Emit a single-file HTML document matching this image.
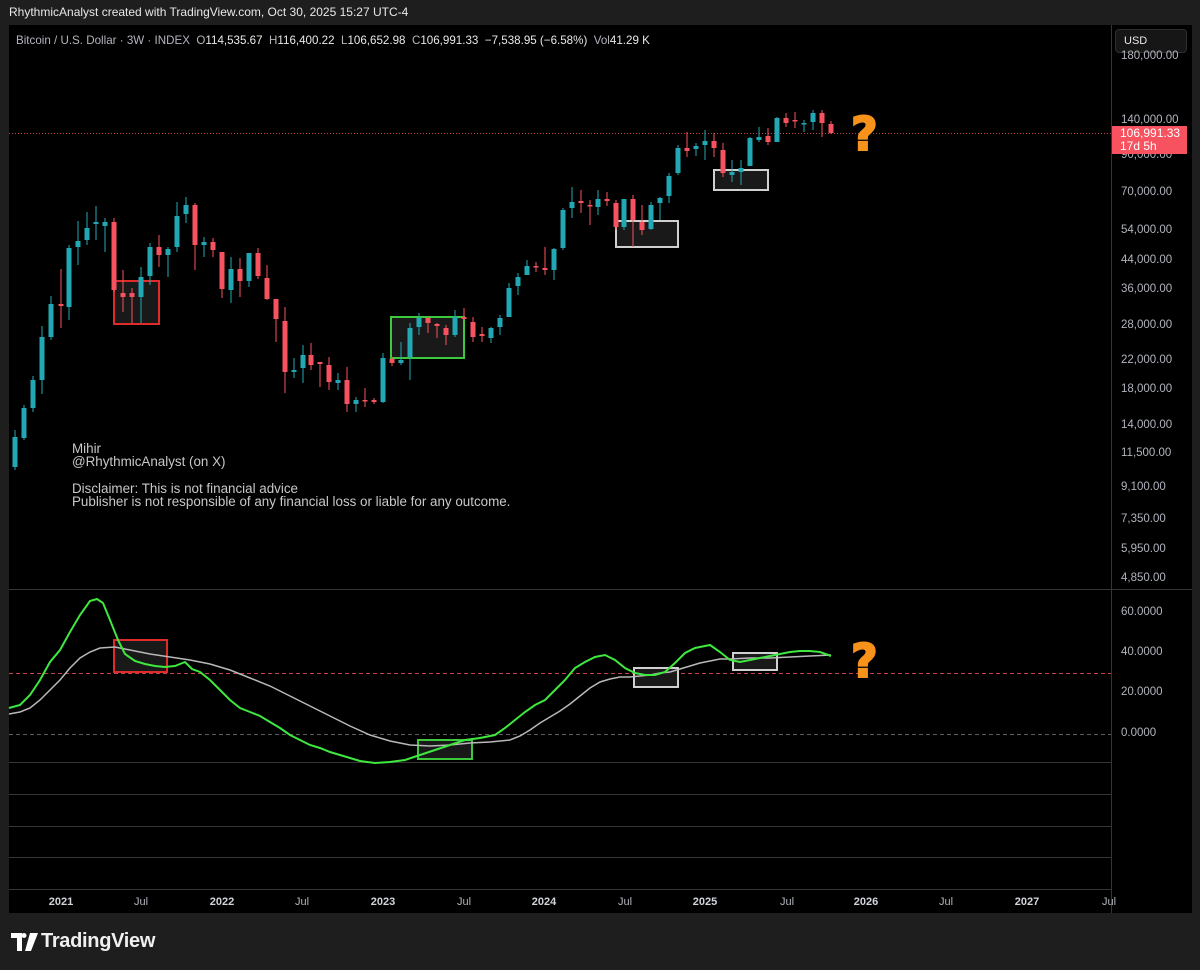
<!DOCTYPE html>
<html><head><meta charset="utf-8"><style>
*{margin:0;padding:0;box-sizing:border-box}
body{width:1200px;height:970px;background:#1e1e1e;font-family:"Liberation Sans",sans-serif;overflow:hidden;position:relative;color:#d1d4dc}
.abs{position:absolute;white-space:nowrap}
</style></head><body>
<div class="abs" style="left:9px;top:5px;font-size:12px;color:#e8e8e8">RhythmicAnalyst created with TradingView.com, Oct 30, 2025 15:27 UTC-4</div>
<div class="abs" style="left:9px;top:25px;width:1183px;height:888px;background:#000"></div>
<svg class="abs" style="left:0;top:0" width="1200" height="970" id="s">
<g stroke="#363636" stroke-width="1">
<line x1="1111.5" y1="25" x2="1111.5" y2="913"/>
<line x1="9" y1="589.5" x2="1192" y2="589.5"/>
<line x1="9" y1="762.5" x2="1111" y2="762.5"/>
<line x1="9" y1="794.5" x2="1111" y2="794.5"/>
<line x1="9" y1="826.5" x2="1111" y2="826.5"/>
<line x1="9" y1="857.5" x2="1111" y2="857.5"/>
<line x1="9" y1="889.5" x2="1111" y2="889.5"/>
</g>
<line x1="9" y1="133.5" x2="1111" y2="133.5" stroke="#f7525f" stroke-width="1" stroke-dasharray="1,2" opacity=".8"/>
<line x1="9" y1="673.5" x2="1111" y2="673.5" stroke="#f7525f" stroke-width="1" stroke-dasharray="4,3" opacity=".8"/>
<line x1="9" y1="734.5" x2="1111" y2="734.5" stroke="#888" stroke-width="1" stroke-dasharray="4,3" opacity=".7"/>
<g fill="#1c1c1c" fill-opacity=".9" stroke-width="2">
<rect x="114" y="281" width="45" height="43" stroke="#e02b2b"/>
<rect x="391" y="317" width="73" height="41" stroke="#3ec83e"/>
<rect x="616" y="221" width="62" height="26" stroke="#d0d0d0"/>
<rect x="714" y="170" width="54" height="20" stroke="#d0d0d0"/>
<rect x="114" y="640" width="53" height="32" stroke="#e02b2b"/>
<rect x="418" y="740" width="54" height="19" stroke="#3ec83e"/>
<rect x="634" y="668" width="44" height="19" stroke="#d0d0d0"/>
<rect x="733" y="653" width="44" height="17" stroke="#d0d0d0"/>
</g>
<g id="c"></g>
<polyline fill="none" stroke="#b8b8b8" stroke-width="1.5" points="9,714 20,712 30,708 40,700 50,690 60,680 70,668 80,658 90,652 100,648 115,647 130,650 150,654 170,657 190,660 210,664 230,670 250,678 270,686 290,696 310,706 330,716 350,726 370,735 390,741 410,745 430,746 450,745 470,743 490,742 510,740 520,736 530,730 540,723 550,717 560,711 570,704 580,696 590,688 600,682 610,679 620,677 630,677 640,676 650,675 660,673 670,672 680,669 690,666 700,663 710,661 720,659 730,659 750,658 770,658 790,657 810,656 831,655"/>
<polyline fill="none" stroke="#3ee83e" stroke-width="2" points="9,708 20,705 30,695 40,680 50,662 60,650 70,632 80,615 90,601 97,599 103,603 110,620 118,640 125,654 135,661 145,664 155,666 165,667 175,666 185,662 192,669 200,672 210,680 220,690 230,700 240,708 250,712 260,716 270,722 280,728 290,735 300,740 310,745 320,748 330,752 340,755 350,758 360,761 375,763 390,762 405,760 420,755 435,750 450,745 465,740 480,738 495,735 505,728 515,720 525,712 535,705 545,700 555,690 565,680 575,668 585,662 595,657 605,655 615,660 625,668 635,673 645,675 655,675 665,672 675,663 685,653 695,648 710,645 720,652 730,660 740,662 750,660 760,658 770,656 780,654 790,652 800,651 810,651 820,652 831,656"/>
<g fill="#f7931a" stroke="#f7931a" stroke-width="2" font-family="DejaVu Sans,sans-serif" font-weight="bold" font-size="46">
<text x="851" y="150">?</text><text x="851" y="677">?</text>
</g>
</svg>
<div class="abs" style="left:16px;top:34px;font-size:11.6px;color:#b2b5be">Bitcoin / U.S. Dollar · 3W · INDEX &nbsp;O<span style="color:#e8e8e8">114,535.67</span> &nbsp;H<span style="color:#e8e8e8">116,400.22</span> &nbsp;L<span style="color:#e8e8e8">106,652.98</span> &nbsp;C<span style="color:#e8e8e8">106,991.33</span> &nbsp;<span style="color:#e8e8e8">−7,538.95 (−6.58%)</span> &nbsp;Vol<span style="color:#e8e8e8">41.29 K</span></div>
<div class="abs" style="left:1115px;top:29px;width:72px;height:24px;background:#161616;border:1px solid #2e2e2e;border-radius:4px;font-size:11px;color:#e8e8e8;padding:5px 8px">USD</div>
<div class="abs" style="left:72px;top:442px;font-size:13.4px;line-height:13.3px;color:#c8c8c8">Mihir<br>@RhythmicAnalyst (on X)<br><br>Disclaimer: This is not financial advice<br>Publisher is not responsible of any financial loss or liable for any outcome.</div>
<div id="ax" style="font-size:11.5px;color:#b2b5be"></div>
<div class="abs" style="left:1112px;top:126px;width:75px;height:28px;background:#f7525f;color:#fff;font-size:12px;line-height:13px;padding:1px 0 0 8px">106,991.33<br>17d 5h</div>
<div id="tx" style="font-size:11px;color:#b2b5be"></div>
<svg class="abs" style="left:11px;top:933px" width="28" height="18" viewBox="0 0 28 18"><path d="M0 0h11v18h-5v-13h-6z M13 0a2.5 2.5 0 1 1 0 5a2.5 2.5 0 1 1 0-5z M19 0h8l-7 18h-6z" fill="#fff"/></svg>
<div class="abs" style="left:41px;top:930px;font-size:20px;font-weight:bold;color:#f0f0f0;letter-spacing:-0.3px">TradingView</div>
<script>
var D=[[15,467,437,470,430],[24,438,408,440,405],[33,408,380,412,376],[42,380,337,394,326],[51,337,304,340,296],[61,304,306,269,328],[69,307,248,320,245],[78,247,241,265,221],[87,240,228,245,212],[96,224,222,240,206],[105,226,222,252,218],[114,222,290,218,292],[123,293,297,270,312],[132,293,297,288,323],[141,297,277,323,267],[150,276,247,285,243],[159,247,255,235,267],[168,255,249,277,247],[177,247,216,252,202],[186,214,205,223,197],[195,205,245,203,270],[204,245,242,257,237],[213,242,250,238,257],[222,252,289,252,298],[231,290,269,303,257],[240,269,281,258,297],[249,281,253,287,253],[258,253,276,248,279],[267,278,299,265,300],[276,299,319,299,342],[285,321,372,307,393],[294,372,370,378,358],[303,368,355,383,345],[311,355,365,343,370],[320,362,364,362,387],[329,365,382,357,390],[338,383,380,390,373],[347,380,404,367,412],[356,404,400,412,397],[365,400,401,388,407],[374,400,402,398,404],[383,402,358,403,353],[392,359,363,357,366],[401,363,360,365,342],[410,357,328,380,323],[419,327,318,335,313],[428,318,323,317,333],[437,324,326,323,338],[446,328,335,325,345],[455,335,317,337,310],[464,317,319,308,320],[473,322,337,317,342],[482,334,336,327,342],[491,338,328,343,327],[500,327,318,335,315],[509,317,288,317,283],[518,286,277,295,273],[527,275,266,275,260],[536,266,267,262,272],[545,268,270,247,275],[554,270,249,280,248],[563,248,210,250,208],[572,208,202,218,187],[581,201,203,190,213],[590,205,206,200,225],[598,207,199,215,190],[607,199,201,192,206],[616,203,227,200,230],[624,227,199,230,199],[633,199,220,195,247],[642,222,230,205,235],[651,229,205,230,202],[660,203,198,220,197],[669,196,176,203,173],[678,173,148,175,145],[687,148,151,132,157],[696,149,146,156,143],[705,145,141,160,130],[714,141,148,133,157],[723,150,173,143,177],[732,175,172,182,160],[741,172,168,185,160],[750,166,138,166,137],[759,140,137,142,127],[768,136,142,128,145],[777,142,118,142,117],[786,118,123,113,127],[795,120,121,112,128],[804,124,123,132,120],[813,122,113,130,110],[822,113,123,110,137],[831,124,133,121,134]];
var g=document.getElementById('c'),h='';
D.forEach(function(c){var up=c[2]<c[1],col=up?'#22a8b4':'#f7525f';var t=Math.min(c[1],c[2]),b=Math.max(c[1],c[2]);var hi=Math.min(c[3],c[4],t),lo=Math.max(c[3],c[4],b);
h+='<line x1="'+c[0]+'" x2="'+c[0]+'" y1="'+hi+'" y2="'+lo+'" stroke="'+col+'" stroke-width="1"/>';
h+='<rect x="'+(c[0]-2.5)+'" y="'+t+'" width="5" height="'+Math.max(b-t,1.5)+'" fill="'+col+'"/>';});
g.innerHTML=h;
var A=[['180,000.00',57],['140,000.00',121],['90,000.00',156],['70,000.00',193],['54,000.00',231],['44,000.00',261],['36,000.00',290],['28,000.00',326],['22,000.00',361],['18,000.00',390],['14,000.00',426],['11,500.00',454],['9,100.00',488],['7,350.00',520],['5,950.00',550],['4,850.00',579],['60.0000',613],['40.0000',653],['20.0000',693],['0.0000',734]],s='';
A.forEach(function(a){s+='<div class="abs" style="left:1121px;top:'+(a[1]-7)+'px">'+a[0]+'</div>'});
document.getElementById('ax').innerHTML=s;
var T=[['2021',61,1],['Jul',141],['2022',222,1],['Jul',302],['2023',383,1],['Jul',464],['2024',544,1],['Jul',625],['2025',705,1],['Jul',787],['2026',866,1],['Jul',946],['2027',1027,1],['Jul',1109]],u='';
T.forEach(function(a){u+='<div class="abs" style="left:'+(a[1]-15)+'px;width:30px;text-align:center;top:896px;'+(a[2]?'font-weight:bold;color:#d1d4dc':'')+'">'+a[0]+'</div>'});
document.getElementById('tx').innerHTML=u;
</script>
</body></html>
